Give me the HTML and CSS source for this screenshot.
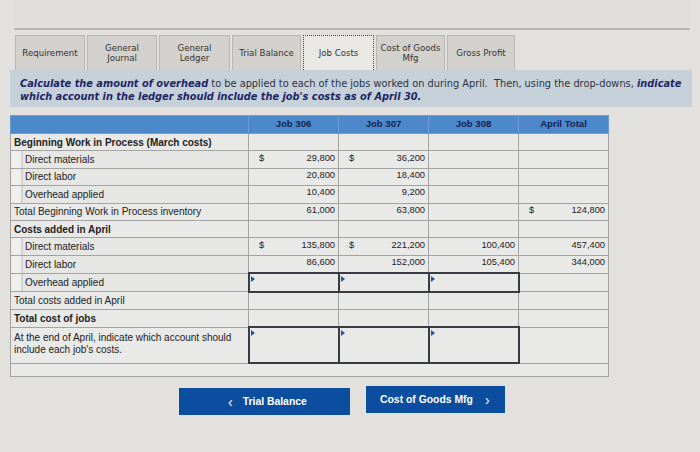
FILE: index.html
```html
<!DOCTYPE html>
<html>
<head>
<meta charset="utf-8">
<link rel="stylesheet" href="styles.css">
</head>
<body>
<div class="top"></div>
<div class="tabs">
  <div class="tab w70">Requirement</div>
  <div class="tab w70">General<br>Journal</div>
  <div class="tab w71">General<br>Ledger</div>
  <div class="tab w69">Trial Balance</div>
  <div class="tab active w71">Job Costs</div>
  <div class="tab w69">Cost of Goods<br>Mfg</div>
  <div class="tab w68">Gross Profit</div>
</div>
<div class="instr"><b>Calculate the amount of overhead</b> to be applied to each of the jobs worked on during April.&nbsp; Then, using the drop-downs, <b>indicate which account in the ledger should include the job's costs as of April 30.</b></div>
<table class="grid">
  <colgroup><col class="c0"><col class="c1"><col class="c1"><col class="c1"><col class="c1"></colgroup>
  <tr class="head"><th></th><th>Job 306</th><th>Job 307</th><th>Job 308</th><th>April Total</th></tr>
  <tr><td class="lbl b">Beginning Work in Process (March costs)</td><td></td><td></td><td></td><td></td></tr>
  <tr><td class="lbl ind">Direct materials</td><td><div class="num"><span>$</span><span>29,800</span></div></td><td><div class="num"><span>$</span><span>36,200</span></div></td><td></td><td></td></tr>
  <tr><td class="lbl ind">Direct labor</td><td><div class="num"><span></span><span>20,800</span></div></td><td><div class="num"><span></span><span>18,400</span></div></td><td></td><td></td></tr>
  <tr><td class="lbl ind">Overhead applied</td><td><div class="num"><span></span><span>10,400</span></div></td><td><div class="num"><span></span><span>9,200</span></div></td><td></td><td></td></tr>
  <tr><td class="lbl">Total Beginning Work in Process inventory</td><td><div class="num"><span></span><span>61,000</span></div></td><td><div class="num"><span></span><span>63,800</span></div></td><td></td><td><div class="num"><span>$</span><span>124,800</span></div></td></tr>
  <tr><td class="lbl b">Costs added in April</td><td></td><td></td><td></td><td></td></tr>
  <tr><td class="lbl ind">Direct materials</td><td><div class="num"><span>$</span><span>135,800</span></div></td><td><div class="num"><span>$</span><span>221,200</span></div></td><td><div class="num"><span></span><span>100,400</span></div></td><td><div class="num"><span></span><span>457,400</span></div></td></tr>
  <tr><td class="lbl ind">Direct labor</td><td><div class="num"><span></span><span>86,600</span></div></td><td><div class="num"><span></span><span>152,000</span></div></td><td><div class="num"><span></span><span>105,400</span></div></td><td><div class="num"><span></span><span>344,000</span></div></td></tr>
  <tr><td class="lbl ind">Overhead applied</td><td class="inp"><i class="tri"></i></td><td class="inp"><i class="tri"></i></td><td class="inp"><i class="tri"></i></td><td></td></tr>
  <tr><td class="lbl">Total costs added in April</td><td></td><td></td><td></td><td></td></tr>
  <tr><td class="lbl b">Total cost of jobs</td><td></td><td></td><td></td><td></td></tr>
  <tr class="tall"><td class="lbl">At the end of April, indicate which account should include each job's costs.</td><td class="inp"><i class="tri"></i></td><td class="inp"><i class="tri"></i></td><td class="inp"><i class="tri"></i></td><td></td></tr>
  <tr class="last"><td colspan="5"></td></tr>
</table>
<div class="nav">
  <button class="btn prev"><span class="chev">&lsaquo;</span>Trial Balance</button>
  <button class="btn next">Cost of Goods Mfg<span class="chev">&rsaquo;</span></button>
</div>
</body>
</html>
```
FILE: styles.css
```css
html, body {
  margin: 0;
  padding: 0;
}
body {
  width: 700px;
  height: 452px;
  overflow: hidden;
  background: #e3e1dd;
  font-family: "DejaVu Sans", Verdana, sans-serif;
  color: #2a2a2a;
}
.top {
  height: 28px;
  margin: 0 10px 0 14px;
  border-bottom: 2px solid #b7b5b1;
  background: #e1dfdb;
}
.tabs {
  display: flex;
  gap: 2px;
  margin: 5px 0 0 15px;
  height: 35px;
}
.tab {
  box-sizing: border-box;
  height: 35px;
  background: #d3d1cd;
  border: 1px solid #b9b7b3;
  border-bottom: none;
  display: flex;
  align-items: center;
  justify-content: center;
  text-align: center;
  font-size: 8.6px;
  line-height: 10px;
  color: #333;
}
.tab.active {
  background: #e9e8e5;
  border: 1px dotted #444;
  border-bottom: none;
}
.w68 { width: 68px; }
.w69 { width: 69px; }
.w70 { width: 70px; }
.w71 { width: 71px; }
.instr {
  box-sizing: border-box;
  margin: 0 8px 0 10px;
  height: 37px;
  background: #c6d0d9;
  padding: 8px 8px 0 10px;
  font-size: 9.8px;
  line-height: 12.5px;
  color: #2b3340;
}
.instr b {
  font-style: italic;
  color: #1c2566;
}
.grid {
  margin: 8px 0 0 10px;
  width: 599px;
  border-collapse: collapse;
  table-layout: fixed;
  font-family: "Liberation Sans", Arial, sans-serif;
  font-size: 10px;
  color: #222;
  background: #e9e9e7;
}
.c0 { width: 238px; }
.c1 { width: 90px; }
.grid th, .grid td {
  border: 1px solid #a3a3a1;
  height: 16.4px;
  padding: 0;
  vertical-align: middle;
}
.head th {
  background: #4d88cb;
  border: 1px solid #6a9bd3;
  color: #14244a;
  font-weight: bold;
  font-size: 9.6px;
  height: 15px;
  vertical-align: top;
  padding-top: 2px;
  text-align: center;
}
.lbl {
  padding: 0 3px !important;
  white-space: nowrap;
}
.lbl.b { font-weight: bold; }
.lbl.ind {
  padding-left: 14px !important;
  background: linear-gradient(90deg, #eeeeec 10px, #b9b9b7 10px, #b9b9b7 11px, #e6e6e4 11px);
}
.num {
  display: flex;
  justify-content: space-between;
  padding: 0 3px 0 10px;
  font-size: 9.3px;
  position: relative;
  top: -2px;
}
.inp {
  border: 2px solid #363b45 !important;
  position: relative;
  vertical-align: top !important;
}
.tri {
  position: absolute;
  left: 1px;
  top: 2px;
  width: 0;
  height: 0;
  border-top: 3px solid transparent;
  border-bottom: 3px solid transparent;
  border-left: 4px solid #2452a3;
}
.tall td {
  height: 34px;
}
.tall .lbl {
  white-space: normal;
  line-height: 12px;
  vertical-align: top;
  padding-top: 4px !important;
  height: 30px;
}
.last td {
  height: 12px;
}
.nav {
  display: flex;
  gap: 16px;
  margin: 9px 0 0 179px;
  align-items: flex-start;
}
.btn {
  border: none;
  background: #0b4d9f;
  color: #fff;
  font-family: "Liberation Sans", Arial, sans-serif;
  font-weight: bold;
  font-size: 10.4px;
  height: 27px;
  padding: 0;
  display: flex;
  align-items: center;
}
.prev {
  width: 171px;
  padding-left: 49px;
  margin-top: 2px;
}
.next {
  width: 139px;
  padding-left: 14px;
}
.chev {
  font-size: 14px;
  font-weight: normal;
  line-height: 10px;
}
.prev .chev { margin-right: 10px; }
.next .chev { margin-left: 12px; }
```
